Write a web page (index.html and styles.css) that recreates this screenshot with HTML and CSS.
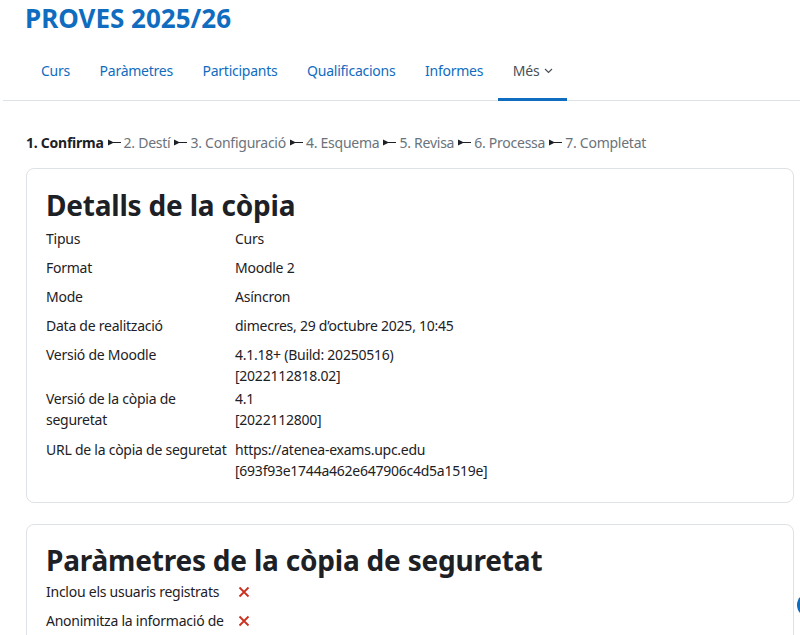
FILE: index.html
```html
<!DOCTYPE html>
<html lang="ca">
<head>
  <meta charset="UTF-8">
  <meta name="viewport" content="width=device-width, initial-scale=1.0">
  <title>PROVES 2025/26: Còpia de seguretat</title>
  <link rel="stylesheet" href="styles.css">
</head>
<body>
  <header class="page-header">
    <h1>PROVES 2025/26</h1>
  </header>

  <nav class="secondary-nav">
    <ul>
      <li><a href="#">Curs</a></li>
      <li><a href="#">Paràmetres</a></li>
      <li><a href="#">Participants</a></li>
      <li><a href="#">Qualificacions</a></li>
      <li><a href="#">Informes</a></li>
      <li><a href="#" class="active">Més <svg class="caret" width="9" height="6" viewBox="0 0 9 6"><path d="M1 1l3.5 3.5L8 1" fill="none" stroke="currentColor" stroke-width="1.2"/></svg></a></li>
    </ul>
  </nav>

  <main class="content">
    <div class="progress">
      <span class="step current">1. Confirma</span>
      <span class="sep"><svg width="13" height="7" viewBox="0 0 13 7"><path d="M0 0.5L6 3.5L0 6.5Z"/><rect x="5" y="3" width="8" height="1"/></svg></span>
      <span class="step">2. Destí</span>
      <span class="sep"><svg width="13" height="7" viewBox="0 0 13 7"><path d="M0 0.5L6 3.5L0 6.5Z"/><rect x="5" y="3" width="8" height="1"/></svg></span>
      <span class="step">3. Configuració</span>
      <span class="sep"><svg width="13" height="7" viewBox="0 0 13 7"><path d="M0 0.5L6 3.5L0 6.5Z"/><rect x="5" y="3" width="8" height="1"/></svg></span>
      <span class="step">4. Esquema</span>
      <span class="sep"><svg width="13" height="7" viewBox="0 0 13 7"><path d="M0 0.5L6 3.5L0 6.5Z"/><rect x="5" y="3" width="8" height="1"/></svg></span>
      <span class="step">5. Revisa</span>
      <span class="sep"><svg width="13" height="7" viewBox="0 0 13 7"><path d="M0 0.5L6 3.5L0 6.5Z"/><rect x="5" y="3" width="8" height="1"/></svg></span>
      <span class="step">6. Processa</span>
      <span class="sep"><svg width="13" height="7" viewBox="0 0 13 7"><path d="M0 0.5L6 3.5L0 6.5Z"/><rect x="5" y="3" width="8" height="1"/></svg></span>
      <span class="step">7. Completat</span>
    </div>

    <section class="card">
      <h2>Detalls de la còpia</h2>
      <div class="details">
        <div class="pair"><div class="label">Tipus</div><div class="value">Curs</div></div>
        <div class="pair"><div class="label">Format</div><div class="value">Moodle 2</div></div>
        <div class="pair"><div class="label">Mode</div><div class="value">Asíncron</div></div>
        <div class="pair"><div class="label">Data de realització</div><div class="value">dimecres, 29 d’octubre 2025, 10:45</div></div>
        <div class="pair tight"><div class="label">Versió de Moodle</div><div class="value">4.1.18+ (Build: 20250516)<br>[2022112818.02]</div></div>
        <div class="pair"><div class="label">Versió de la còpia de seguretat</div><div class="value">4.1<br>[2022112800]</div></div>
        <div class="pair loose"><div class="label">URL de la còpia de seguretat</div><div class="value">https://atenea-exams.upc.edu<br>[693f93e1744a462e647906c4d5a1519e]</div></div>
      </div>
    </section>

    <section class="card">
      <h2 class="compact">Paràmetres de la còpia de seguretat</h2>
      <div class="details settings">
        <div class="pair"><div class="label">Inclou els usuaris registrats</div><div class="value"><svg class="no" width="12" height="12" viewBox="0 0 12 12"><path d="M1.5 1.5l9 9M10.5 1.5l-9 9" stroke="currentColor" stroke-width="1.8"/></svg></div></div>
        <div class="pair"><div class="label">Anonimitza la informació de l’usuari</div><div class="value"><svg class="no" width="12" height="12" viewBox="0 0 12 12"><path d="M1.5 1.5l9 9M10.5 1.5l-9 9" stroke="currentColor" stroke-width="1.8"/></svg></div></div>
      </div>
    </section>
  </main>

  <a href="#" class="drawer-toggle" aria-label="Obre el calaix"></a>
</body>
</html>
```

FILE: styles.css
```css
body {
  margin: 0;
  font-family: "Segoe UI", "Noto Sans", Roboto, Arial, sans-serif;
  font-size: 14px;
  line-height: 21px;
  letter-spacing: -0.25px;
  color: #1d2125;
  background-color: #fff;
  overflow: hidden;
}
a {
  color: #0f6cbf;
  text-decoration: none;
}
.page-header {
  padding: 0 25px;
}
.page-header h1 {
  margin: 0;
  font-size: 26px;
  line-height: 36px;
  font-weight: 700;
  letter-spacing: 0;
  color: #0f6cbf;
}
.secondary-nav {
  margin: 14px 0 0 3px;
  border-bottom: 1px solid #dee2e6;
}
.secondary-nav ul {
  display: flex;
  margin: 0;
  padding: 0 0 0 23px;
  list-style: none;
}
.secondary-nav a {
  display: block;
  padding: 10px 14.6px 17px 15px;
  border-bottom: 3px solid transparent;
  margin-bottom: -1px;
}
.secondary-nav a.active {
  color: #495057;
  border-bottom-color: #0f6cbf;
}
.caret {
  vertical-align: 2px;
  margin-left: 1px;
}
.content {
  padding: 31px 6px 0 26px;
}
.progress {
  display: flex;
  align-items: center;
  flex-wrap: wrap;
  color: #6a737b;
  margin-bottom: 15px;
}
.progress .current {
  color: #1d2125;
  font-weight: 700;
}
.progress .sep {
  display: inline-flex;
  margin: 0 3px 0 4px;
}
.progress .sep svg {
  fill: #1d2125;
}
.card {
  border: 1px solid #dee2e6;
  border-radius: 8px;
  padding: 19px 19px 21px;
  margin-bottom: 21px;
}
.card h2 {
  margin: 0 0 5px;
  font-size: 28px;
  line-height: 35px;
  font-weight: 700;
  letter-spacing: -0.2px;
}
.card h2.compact {
  margin-bottom: 3px;
  margin-top: -1px;
}
.details {
  display: flex;
  flex-direction: column;
  gap: 8px;
}
.pair {
  display: grid;
  grid-template-columns: 189px 1fr;
}
.pair.tight {
  margin-bottom: -6px;
}
.pair.loose {
  margin-top: 1px;
}
.settings .pair {
  grid-template-columns: 192px 1fr;
}
.settings .label {
  padding-right: 8px;
}
.value .no {
  color: #ca3120;
  vertical-align: -1px;
}
.drawer-toggle {
  position: fixed;
  left: 797px;
  top: 593px;
  width: 24px;
  height: 24px;
  border-radius: 50%;
  background-color: #0f6cbf;
}
```
